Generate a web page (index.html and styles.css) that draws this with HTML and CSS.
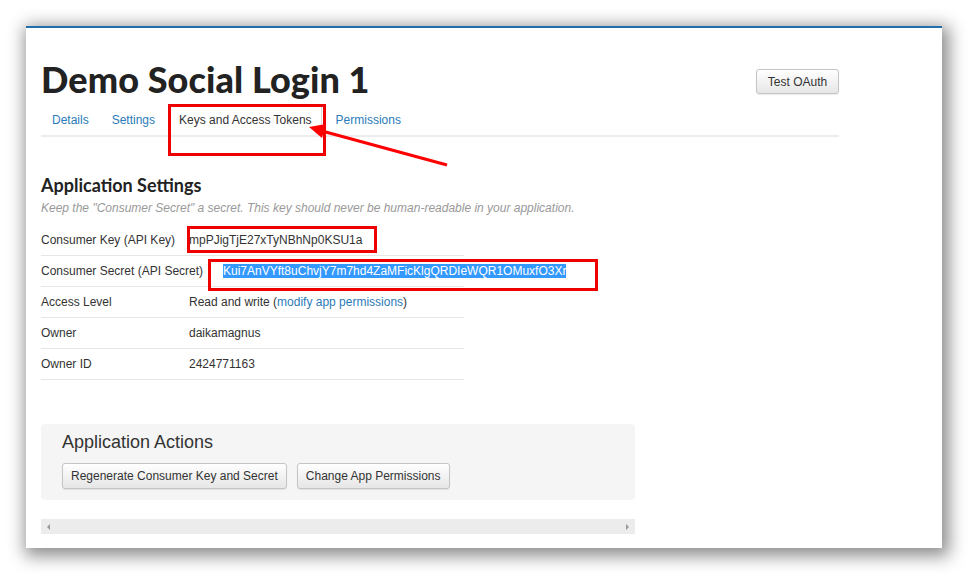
FILE: index.html
```html
<!DOCTYPE html>
<html>
<head>
<meta charset="utf-8">
<link rel="stylesheet" href="styles.css">
</head>
<body>
<div class="window">
  <header class="head">
    <h1 class="title">Demo Social Login 1</h1>
    <button class="btn btn-test">Test OAuth</button>
  </header>
  <nav class="tabs">
    <a class="tab">Details</a>
    <a class="tab">Settings</a>
    <a class="tab active">Keys and Access Tokens</a>
    <a class="tab">Permissions</a>
  </nav>
  <section class="settings">
    <h2 class="sec-title">Application Settings</h2>
    <p class="note">Keep the "Consumer Secret" a secret. This key should never be human-readable in your application.</p>
    <div class="rows">
      <div class="row"><span class="label">Consumer Key (API Key)</span><span class="value">mpPJigTjE27xTyNBhNp0KSU1a</span></div>
      <div class="row"><span class="label">Consumer Secret (API Secret)</span><span class="value secret"><span class="sel">Kui7AnVYft8uChvjY7m7hd4ZaMFicKlgQRDIeWQR1OMuxfO3Xr</span></span></div>
      <div class="row"><span class="label">Access Level</span><span class="value">Read and write (<a class="link">modify app permissions</a>)</span></div>
      <div class="row"><span class="label">Owner</span><span class="value">daikamagnus</span></div>
      <div class="row"><span class="label">Owner ID</span><span class="value">2424771163</span></div>
    </div>
  </section>
  <section class="actions">
    <h3 class="act-title">Application Actions</h3>
    <div class="act-btns">
      <button class="btn">Regenerate Consumer Key and Secret</button>
      <button class="btn">Change App Permissions</button>
    </div>
  </section>
  <div class="hscroll">
    <span class="arr arr-l"></span>
    <span class="arr arr-r"></span>
  </div>

  <div class="mark mark-tab"></div>
  <div class="mark mark-key"></div>
  <div class="mark mark-secret"></div>
  <svg class="arrow" width="968" height="574" viewBox="0 0 968 574">
    <line x1="447" y1="165" x2="322" y2="131" stroke="#f00" stroke-width="3"/>
    <polygon points="309,127 326,124 322,138" fill="#f00"/>
  </svg>
</div>
</body>
</html>
```
FILE: styles.css
```css
html, body {
  margin: 0;
  padding: 0;
  background: #fff;
}
body {
  padding: 26px 26px 26px 26px;
  font-family: "Liberation Sans", Arial, sans-serif;
  font-size: 12px;
  color: #333;
}
.window {
  width: 916px;
  height: 522px;
  box-sizing: border-box;
  background: #fff;
  border-top: 2px solid #1f6fae;
  box-shadow: 3px 4px 16px 4px rgba(0,0,0,0.45);
  padding: 0 0 0 15px;
  display: flex;
  flex-direction: column;
}
.head {
  width: 798px;
  display: flex;
  justify-content: space-between;
  align-items: flex-start;
  margin-top: 25px;
}
.title {
  margin: 0;
  font-family: Lato, "Noto Sans", sans-serif;
  font-weight: 900;
  font-size: 36px;
  line-height: 52px;
  color: #222;
  letter-spacing: 0.1px;
}
.btn {
  font-family: "Liberation Sans", Arial, sans-serif;
  font-size: 12px;
  color: #333;
  background: linear-gradient(#ffffff, #e6e6e6);
  border: 1px solid #c4c4c4;
  border-radius: 3px;
  height: 25px;
  padding: 0 8px;
  box-shadow: 0 1px 1px rgba(0,0,0,0.08);
}
.btn-test {
  margin-top: 16px;
  height: 25px;
  width: 83px;
  padding: 0;
}
.tabs {
  width: 798px;
  display: flex;
  border-bottom: 2px solid #ececec;
  margin-top: 0;
  height: 30px;
}
.tab {
  color: #2b7bb9;
  padding: 6px 10px 0 10px;
  line-height: 16px;
  border: 1px solid transparent;
  border-bottom: none;
}
.tab + .tab { margin-left: 1px; }
.tab:nth-child(3) { padding-left: 11px; padding-right: 9px; }
.tab:nth-child(4) { padding-left: 12px; }
.tab.active {
  color: #333;
  border-color: transparent #dcdcdc transparent transparent;
  background: #fff;
}
.settings {
  width: 423px;
  margin-top: 37px;
}
.sec-title {
  margin: 0;
  font-family: Lato, "Noto Sans", sans-serif;
  font-weight: 700;
  font-size: 18px;
  line-height: 22px;
  color: #222;
}
.note {
  margin: 4px 0 0 0;
  font-style: italic;
  font-size: 12px;
  line-height: 16px;
  color: #999;
  white-space: nowrap;
}
.rows {
  margin-top: 9px;
}
.row {
  display: flex;
  align-items: center;
  height: 30px;
  border-bottom: 1px solid #e6e6e6;
  white-space: nowrap;
}
.label {
  width: 148px;
  flex: none;
}
.value { color: #333; }
.secret { margin-left: 34px; }
.sel {
  background: #3399ff;
  color: #fff;
}
.link { color: #2b7bb9; }
.actions {
  width: 594px;
  box-sizing: border-box;
  margin-top: 44px;
  background: #f5f5f5;
  border-radius: 4px;
  padding: 7px 21px 11px 21px;
}
.act-title {
  margin: 0;
  font-weight: normal;
  font-size: 18px;
  line-height: 22px;
  color: #333;
}
.act-btns {
  display: flex;
  gap: 10px;
  margin-top: 10px;
}
.act-btns .btn { height: 26px; }
.hscroll {
  width: 594px;
  height: 15px;
  margin-top: 19px;
  background: #ececec;
  display: flex;
  justify-content: space-between;
  align-items: center;
  padding: 0 6px;
  box-sizing: border-box;
}
.arr {
  width: 0; height: 0;
  border-top: 3px solid transparent;
  border-bottom: 3px solid transparent;
}
.arr-l { border-right: 3px solid #999; }
.arr-r { border-left: 3px solid #999; }

.mark {
  position: absolute;
  border: 3px solid #ee0000;
  box-sizing: border-box;
}
.mark-tab { left: 168px; top: 104px; width: 158px; height: 52px; }
.mark-key { left: 187px; top: 226px; width: 190px; height: 27px; }
.mark-secret { left: 208px; top: 259px; width: 390px; height: 32px; }
.arrow {
  position: absolute;
  left: 0;
  top: 0;
  pointer-events: none;
}
```
